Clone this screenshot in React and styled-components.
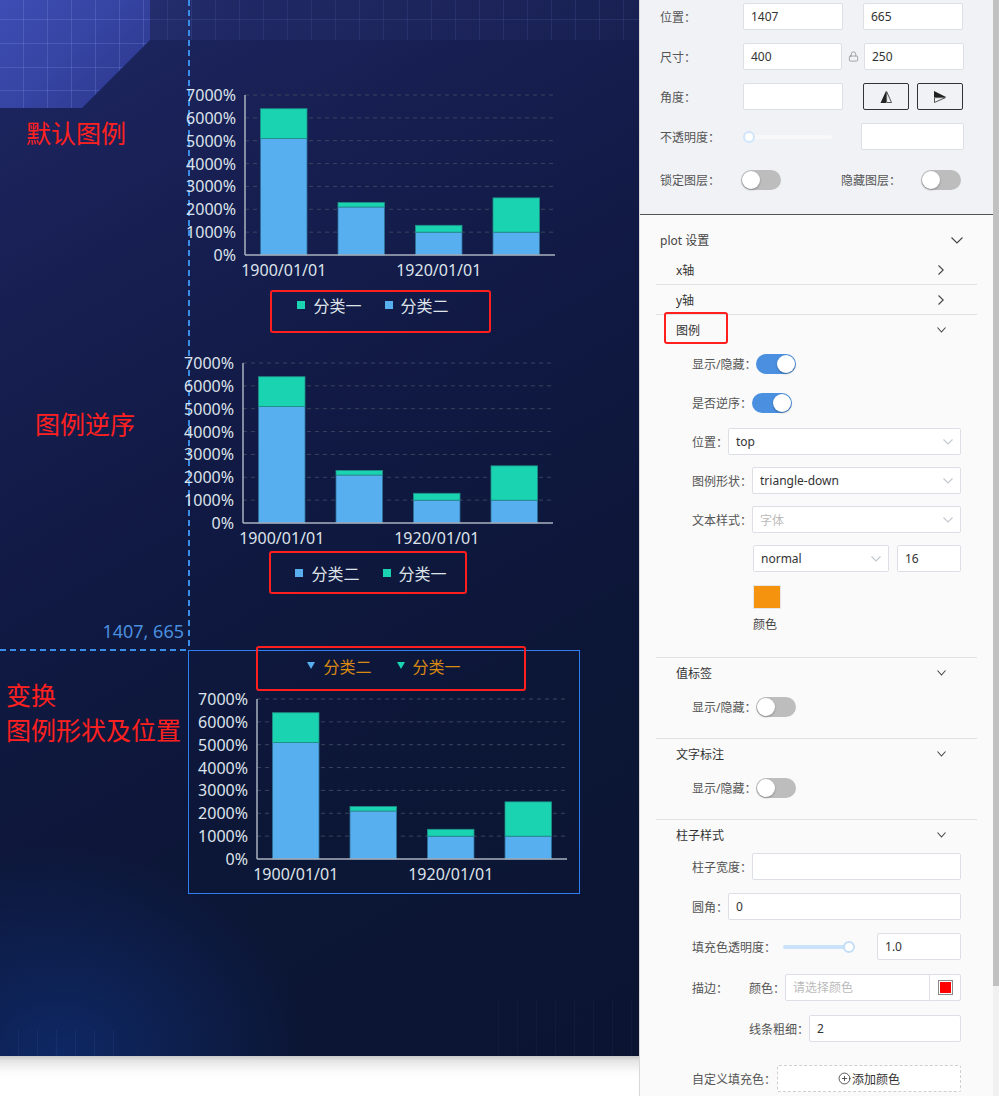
import React from 'react';
import styled, { createGlobalStyle } from 'styled-components';
import { Lock, CirclePlus } from 'lucide-react';

const GlobalStyle = createGlobalStyle`
  html, body { margin: 0; padding: 0; background: #fff; }
  body { font-family: "Noto Sans", "Noto Sans CJK SC", sans-serif; }
  * { box-sizing: border-box; }
`;

/* ---------- page frame ---------- */
const Page = styled.div`
  display: flex;
  width: 999px;
  height: 1096px;
  overflow: hidden;
`;

const Workspace = styled.main`
  flex: none;
  width: 639px;
  display: flex;
  flex-direction: column;
  background: #fff;
`;

const Canvas = styled.div`
  position: relative;
  height: 1056px;
  flex: none;
  overflow: hidden;
  background:
    linear-gradient(180deg, transparent 19.5px, rgba(120,140,230,0.14) 19.5px, rgba(120,140,230,0.14) 20.5px, transparent 20.5px) 0 0 / 100% 40px no-repeat,
    repeating-linear-gradient(90deg, transparent 0 23px, rgba(120,140,230,0.12) 23px 24px) 0 0 / 100% 40px no-repeat,
    linear-gradient(90deg, rgba(70,85,180,0.35), rgba(45,55,125,0.28) 35%, rgba(35,45,95,0.22)) 0 0 / 100% 40px no-repeat,
    repeating-linear-gradient(90deg, transparent 0 18px, rgba(110,140,230,0.08) 18px 19px) 0 1030px / 120px 26px no-repeat,
    repeating-linear-gradient(90deg, transparent 0 18px, rgba(110,140,230,0.05) 18px 19px) 480px 1000px / 160px 56px no-repeat,
    radial-gradient(ellipse 330px 280px at 60px 1056px, rgba(16,55,140,0.55), transparent 75%),
    linear-gradient(150deg, #1e2763 0%, #171f52 22%, #101942 45%, #0c1636 70%, #0b1532 100%);

  &::before {
    content: '';
    position: absolute;
    left: 0;
    top: 0;
    width: 150px;
    height: 108px;
    clip-path: polygon(0 0, 150px 0, 150px 40px, 82px 108px, 0 108px);
    background:
      repeating-linear-gradient(90deg, transparent 0 23px, rgba(150,170,245,0.2) 23px 24px),
      repeating-linear-gradient(180deg, transparent 0 19.5px, rgba(150,170,245,0.2) 19.5px 20.5px, transparent 20.5px 23.6px),
      linear-gradient(135deg, #3e4db4 0%, #3644a3 45%, #2c388b 100%);
  }
`;

const BottomShade = styled.div`
  flex: 1;
  background: linear-gradient(180deg, #c9c9c9 0, #e6e6e6 5px, #fbfbfb 16px, #fff 24px);
`;

/* ---------- canvas items ---------- */
const GuideV = styled.div`
  position: absolute;
  left: 188px;
  top: 0;
  width: 2px;
  height: 650px;
  background: repeating-linear-gradient(180deg, #3a8de6 0 6px, transparent 6px 10px);
`;

const GuideH = styled.div`
  position: absolute;
  left: 0;
  top: 649px;
  width: 189px;
  height: 2px;
  background: repeating-linear-gradient(90deg, #3a8de6 0 6px, transparent 6px 10px);
`;

const CoordTag = styled.div`
  position: absolute;
  left: 60px;
  top: 619px;
  width: 124px;
  text-align: right;
  font-family: "Noto Sans", sans-serif;
  font-size: 18px;
  line-height: 24px;
  color: #4a8fde;
`;

const Caption = styled.div`
  position: absolute;
  left: ${p => p.$x}px;
  top: ${p => p.$y}px;
  font-family: "Noto Sans CJK SC", sans-serif;
  font-size: 25px;
  line-height: 35px;
  color: #ff2020;
  white-space: nowrap;
`;

const Annotation = styled.div`
  position: absolute;
  left: ${p => p.$x}px;
  top: ${p => p.$y}px;
  width: ${p => p.$w}px;
  height: ${p => p.$h}px;
  border: 2.5px solid #ff1f1f;
  border-radius: 3px;
  pointer-events: none;
`;

const Widget = styled.div`
  position: absolute;
  left: ${p => p.$x}px;
  top: ${p => p.$y}px;
  width: ${p => p.$w}px;
  height: ${p => p.$h}px;
  display: flex;
  flex-direction: column;
  border: ${p => (p.$selected ? '1.5px solid #2f7ff0' : 'none')};
  margin: ${p => (p.$selected ? '-1px 0 0 -1px' : '0')};
`;

const PlotSvg = styled.svg`
  display: block;
  flex: none;
  text {
    font-family: "Noto Sans", sans-serif;
    font-size: 16px;
    fill: #dde3eb;
  }
`;

const LegendRow = styled.div`
  flex: none;
  height: ${p => p.$h}px;
  margin-top: ${p => p.$mt}px;
  display: flex;
  justify-content: center;
  align-items: center;
  gap: ${p => p.$gap}px;
`;

const LegendItem = styled.div`
  display: flex;
  align-items: center;
  gap: 8px;
  font-family: "Noto Sans CJK SC", sans-serif;
  font-size: 16px;
  line-height: 1;
  color: ${p => p.$color};
`;

const SquareMark = styled.span`
  width: 8px;
  height: 8px;
  background: ${p => p.$c};
`;

const BLUE = '#58aff0';
const TEAL = '#1ad3b1';
const ticks = [0, 1000, 2000, 3000, 4000, 5000, 6000, 7000];
const bars = [
  { blue: 5100, teal: 1300 },
  { blue: 2100, teal: 200 },
  { blue: 1000, teal: 300 },
  { blue: 1000, teal: 1500 },
];

function Plot() {
  const ax = 68, right = 378, top = 19, zero = 179, labelX = 59, labelY = 194;
  const k = (zero - top) / 7000;
  const band = (right - ax) / 4;
  const bw = band * 0.6;
  return (
    <PlotSvg width="392" height="205" viewBox="0 0 392 205">
      {ticks.map(t => {
        const y = zero - t * k;
        return (
          <g key={t}>
            {t > 0 && (
              <line x1={ax} x2={right} y1={y} y2={y} stroke="#39445e" strokeWidth="1" strokeDasharray="4 4" />
            )}
            <text x={labelX} y={y} textAnchor="end" dominantBaseline="central">{t}%</text>
          </g>
        );
      })}
      {bars.map((b, i) => {
        const x = ax + band * i + band * 0.2;
        const yb = zero - b.blue * k;
        const yt = zero - (b.blue + b.teal) * k;
        return (
          <g key={i}>
            <rect x={x} y={yb} width={bw} height={zero - yb} fill={BLUE} stroke="#2f6f96" strokeWidth="0.8" />
            <rect x={x} y={yt} width={bw} height={yb - yt} fill={TEAL} stroke="#1f8f86" strokeWidth="0.8" />
          </g>
        );
      })}
      <line x1={ax} x2={ax} y1={top} y2={zero} stroke="#aab2bf" strokeWidth="1.5" />
      <line x1={ax} x2={right} y1={zero} y2={zero} stroke="#aab2bf" strokeWidth="1.5" />
      <text x={ax + band * 0.5} y={labelY} textAnchor="middle" dominantBaseline="central">1900/01/01</text>
      <text x={ax + band * 2.5} y={labelY} textAnchor="middle" dominantBaseline="central">1920/01/01</text>
    </PlotSvg>
  );
}

const TriangleMark = ({ c }) => (
  <svg width="8" height="7" viewBox="0 0 8 7">
    <polygon points="0,0 8,0 4,7" fill={c} />
  </svg>
);

function Legend({ items, shape, textColor, h, mt, gap }) {
  return (
    <LegendRow $h={h} $mt={mt} $gap={gap}>
      {items.map(it => (
        <LegendItem key={it.name} $color={textColor}>
          {shape === 'triangle' ? <TriangleMark c={it.color} /> : <SquareMark $c={it.color} />}
          {it.name}
        </LegendItem>
      ))}
    </LegendRow>
  );
}

const normalOrder = [
  { name: '分类一', color: TEAL },
  { name: '分类二', color: BLUE },
];
const reversedOrder = [
  { name: '分类二', color: BLUE },
  { name: '分类一', color: TEAL },
];

/* ---------- panel ---------- */
const Panel = styled.aside`
  flex: none;
  width: 360px;
  display: flex;
  border-left: 1px solid #d8d8d8;
  background: #fafafa;
  font-family: "Noto Sans", "Noto Sans CJK SC", sans-serif;
  font-size: 12px;
  color: #555;
`;

const PanelScroll = styled.div`
  flex: 1;
  min-width: 0;
  overflow: hidden;
`;

const ScrollTrack = styled.div`
  flex: none;
  width: 6px;
  background: #f1f1f1;
`;

const ScrollThumb = styled.div`
  height: 986px;
  background: #c1c1c1;
`;

const Basics = styled.section`
  height: 215px;
  padding: 3px 0 0 20px;
  background: #f0f2f5;
  border-bottom: 1px solid #555;
`;

const BasicRow = styled.div`
  display: flex;
  align-items: center;
  height: 27px;
  margin-bottom: ${p => (p.$mb ?? 13)}px;
`;

const BasicLabel = styled.span`
  flex: none;
  width: ${p => p.$w}px;
  margin-left: ${p => p.$ml || 0}px;
  white-space: nowrap;
`;

const Field = styled.input`
  flex: ${p => (p.$w ? 'none' : '1')};
  width: ${p => (p.$w ? `${p.$w}px` : 'auto')};
  min-width: 0;
  height: 27px;
  margin-left: ${p => p.$ml || 0}px;
  padding: 0 7px;
  border: 1px solid #dcdfe6;
  border-radius: ${p => (p.$joined ? '2px 0 0 2px' : '2px')};
  background: #fff;
  font-family: inherit;
  font-size: 12px;
  color: #333;
  outline: none;
  &::placeholder { color: #bbb; }
`;

const LockSlot = styled.span`
  flex: none;
  width: 22px;
  display: flex;
  justify-content: center;
  color: #8a8a8a;
`;

const IconButton = styled.span`
  flex: none;
  width: 46px;
  height: 27px;
  margin-left: ${p => p.$ml}px;
  display: flex;
  align-items: center;
  justify-content: center;
  border: 1px solid #333;
  border-radius: 2px;
`;

const SliderTrack = styled.span`
  position: relative;
  flex: none;
  width: ${p => p.$w}px;
  height: 4px;
  margin-left: ${p => p.$ml || 0}px;
  border-radius: 2px;
  background: ${p => p.$track};
`;

const SliderThumb = styled.span`
  position: absolute;
  top: 50%;
  left: ${p => p.$pos}px;
  width: 12px;
  height: 12px;
  margin: -6px 0 0 -6px;
  border-radius: 50%;
  background: #fff;
  border: 2px solid ${p => p.$ring};
`;

const Toggle = styled.span`
  position: relative;
  flex: none;
  width: 40px;
  height: 20px;
  border-radius: 10px;
  background: ${p => (p.$on ? '#4a8fe0' : '#bdbdbd')};
  &::after {
    content: '';
    position: absolute;
    top: 1px;
    left: ${p => (p.$on ? '21px' : '1px')};
    width: 18px;
    height: 18px;
    border-radius: 50%;
    background: #fff;
    box-shadow: 0 1px 2px rgba(0, 0, 0, 0.3);
  }
`;

const Lower = styled.section`
  padding: 10px 16px 0;
`;

const PlotHeader = styled.div`
  display: flex;
  align-items: center;
  justify-content: space-between;
  height: 30px;
  padding: 0 14px 0 4px;
  color: #444;
`;

const SubSection = styled.div`
  border-bottom: ${p => (p.$last ? 'none' : '1px solid #e2e2e2')};
`;

const SubHeader = styled.div`
  position: relative;
  display: flex;
  align-items: center;
  justify-content: space-between;
  height: 29px;
  padding: 0 31px 0 20px;
  color: #333;
`;

const HeaderMark = styled.span`
  position: absolute;
  left: 8px;
  top: -3px;
  width: 64px;
  height: 32px;
  border: 2.5px solid #ff1f1f;
  border-radius: 3px;
`;

const IconBox = styled.span`
  flex: none;
  width: ${p => p.$w || 10}px;
  display: flex;
  justify-content: center;
  align-items: center;
`;

const SubBody = styled.div`
  padding: ${p => p.$pt}px 16px ${p => p.$pb}px 36px;
`;

const FormRow = styled.div`
  display: flex;
  align-items: center;
  height: 27px;
  margin-bottom: ${p => (p.$mb ?? 12)}px;
  margin-left: ${p => p.$ml || 0}px;
`;

const FormLabel = styled.span`
  flex: none;
  width: ${p => (p.$w ? `${p.$w}px` : 'auto')};
  white-space: nowrap;
  color: #555;
`;

const Select = styled.div`
  flex: ${p => (p.$w ? 'none' : '1')};
  width: ${p => (p.$w ? `${p.$w}px` : 'auto')};
  height: 27px;
  display: flex;
  align-items: center;
  justify-content: space-between;
  padding: 0 7px;
  border: 1px solid #dcdfe6;
  border-radius: 2px;
  background: #fff;
  color: ${p => (p.$placeholder ? '#bbb' : '#333')};
`;

const Swatch = styled.div`
  width: 28px;
  height: 24px;
  margin: 13px 0 0 61px;
  background: #f5930f;
  border: 1px solid #e6e6e6;
`;

const SwatchCaption = styled.div`
  margin: 8px 0 0 61px;
  line-height: 16px;
  color: #444;
`;

const ColorButton = styled.span`
  flex: none;
  width: 32px;
  height: 27px;
  margin-left: -1px;
  display: flex;
  align-items: center;
  justify-content: center;
  border: 1px solid #dcdfe6;
  border-radius: 0 2px 2px 0;
  background: #fff;
`;

const ColorChip = styled.span`
  width: 15px;
  height: 15px;
  background: #f00;
  border: 1px solid #8a8a8a;
  box-shadow: inset 0 0 0 1px #fff;
`;

const DashedButton = styled.div`
  flex: 1;
  height: 27px;
  margin-left: 1px;
  display: flex;
  align-items: center;
  justify-content: center;
  gap: 1px;
  border: 1px dashed #cfcfcf;
  border-radius: 2px;
  background: #fff;
  color: #333;
`;

const ChevronDown = ({ w = 9, h = 5, color = '#444' }) => (
  <svg width={w} height={h + 1} viewBox={`0 0 ${w} ${h + 1}`}>
    <polyline points={`0.5,0.5 ${w / 2},${h} ${w - 0.5},0.5`} fill="none" stroke={color} strokeWidth="1.1" />
  </svg>
);

const ChevronRight = () => (
  <svg width="6" height="10" viewBox="0 0 6 10">
    <polyline points="0.5,0.5 5.2,5 0.5,9.5" fill="none" stroke="#444" strokeWidth="1.1" />
  </svg>
);

const FlipH = () => (
  <svg width="14" height="14" viewBox="0 0 14 14">
    <polygon points="7,1 7,13 1.5,13" fill="#222" />
    <polygon points="7.6,1.5 12.5,12.5 7.6,12.5" fill="none" stroke="#444" strokeWidth="0.9" />
  </svg>
);

const FlipV = () => (
  <svg width="14" height="14" viewBox="0 0 14 14">
    <polygon points="1,1 13,7 1,7" fill="#222" />
    <polygon points="1.5,7.6 12.5,7.6 1.5,12.5" fill="none" stroke="#444" strokeWidth="0.9" />
  </svg>
);

function SubPanel({ title, open, last, marked, pt = 6, pb = 18, children }) {
  return (
    <SubSection $last={last}>
      <SubHeader>
        {marked && <HeaderMark />}
        <span>{title}</span>
        <IconBox>{open ? <ChevronDown /> : <ChevronRight />}</IconBox>
      </SubHeader>
      {children && <SubBody $pt={pt} $pb={pb}>{children}</SubBody>}
    </SubSection>
  );
}

function SettingsPanel() {
  return (
    <Panel>
      <PanelScroll>
        <Basics>
          <BasicRow>
            <BasicLabel $w={83}>位置：</BasicLabel>
            <Field $w={100} value="1407" readOnly />
            <Field $w={100} $ml={20} value="665" readOnly />
          </BasicRow>
          <BasicRow>
            <BasicLabel $w={83}>尺寸：</BasicLabel>
            <Field $w={99} value="400" readOnly />
            <LockSlot><Lock size={11} strokeWidth={1.6} /></LockSlot>
            <Field $w={100} value="250" readOnly />
          </BasicRow>
          <BasicRow>
            <BasicLabel $w={83}>角度：</BasicLabel>
            <Field $w={100} value="" readOnly />
            <IconButton $ml={20}><FlipH /></IconButton>
            <IconButton $ml={8}><FlipV /></IconButton>
          </BasicRow>
          <BasicRow $mb={16}>
            <BasicLabel $w={83}>不透明度：</BasicLabel>
            <SliderTrack $w={89} $track="#f8f8f9">
              <SliderThumb $pos={6} $ring="#cfe5fb" />
            </SliderTrack>
            <Field $w={103} $ml={29} value="" readOnly />
          </BasicRow>
          <BasicRow>
            <BasicLabel $w={81}>锁定图层：</BasicLabel>
            <Toggle />
            <BasicLabel $w={80} $ml={60}>隐藏图层：</BasicLabel>
            <Toggle />
          </BasicRow>
        </Basics>

        <Lower>
          <PlotHeader>
            <span>plot 设置</span>
            <ChevronDown w={12} h={6} />
          </PlotHeader>

          <SubPanel title="x轴" />
          <SubPanel title="y轴" />

          <SubPanel title="图例" open marked pb={24}>
            <FormRow>
              <FormLabel>显示/隐藏：</FormLabel>
              <Toggle $on />
            </FormRow>
            <FormRow>
              <FormLabel>是否逆序：</FormLabel>
              <Toggle $on />
            </FormRow>
            <FormRow>
              <FormLabel>位置：</FormLabel>
              <Select>top<ChevronDown w={10} h={5} color="#c4c7cc" /></Select>
            </FormRow>
            <FormRow>
              <FormLabel>图例形状：</FormLabel>
              <Select>triangle-down<ChevronDown w={10} h={5} color="#c4c7cc" /></Select>
            </FormRow>
            <FormRow>
              <FormLabel>文本样式：</FormLabel>
              <Select $placeholder>字体<ChevronDown w={10} h={5} color="#c4c7cc" /></Select>
            </FormRow>
            <FormRow $ml={61} $mb={0}>
              <Select $w={136}>normal<ChevronDown w={10} h={5} color="#c4c7cc" /></Select>
              <Field $w={64} $ml={8} value="16" readOnly />
            </FormRow>
            <Swatch />
            <SwatchCaption>颜色</SwatchCaption>
          </SubPanel>

          <SubPanel title="值标签" open>
            <FormRow $mb={0}>
              <FormLabel>显示/隐藏：</FormLabel>
              <Toggle />
            </FormRow>
          </SubPanel>

          <SubPanel title="文字标注" open>
            <FormRow $mb={0}>
              <FormLabel>显示/隐藏：</FormLabel>
              <Toggle />
            </FormRow>
          </SubPanel>

          <SubPanel title="柱子样式" open last pt={4} pb={10}>
            <FormRow $mb={13}>
              <FormLabel>柱子宽度：</FormLabel>
              <Field value="" readOnly />
            </FormRow>
            <FormRow $mb={13}>
              <FormLabel>圆角：</FormLabel>
              <Field value="0" readOnly />
            </FormRow>
            <FormRow $mb={14}>
              <FormLabel>填充色透明度：</FormLabel>
              <SliderTrack $w={66} $ml={7} $track="#cbe3fa">
                <SliderThumb $pos={66} $ring="#c2def8" />
              </SliderTrack>
              <Field $w={84} $ml={28} value="1.0" readOnly />
            </FormRow>
            <FormRow $mb={14}>
              <FormLabel $w={57}>描边：</FormLabel>
              <FormLabel>颜色：</FormLabel>
              <Field $joined placeholder="请选择颜色" readOnly />
              <ColorButton><ColorChip /></ColorButton>
            </FormRow>
            <FormRow $ml={57} $mb={23}>
              <FormLabel>线条粗细：</FormLabel>
              <Field value="2" readOnly />
            </FormRow>
            <FormRow>
              <FormLabel>自定义填充色：</FormLabel>
              <DashedButton>
                <CirclePlus size={13} strokeWidth={1.5} />
                添加颜色
              </DashedButton>
            </FormRow>
          </SubPanel>
        </Lower>
      </PanelScroll>
      <ScrollTrack>
        <ScrollThumb />
      </ScrollTrack>
    </Panel>
  );
}

export default function App() {
  return (
    <>
      <GlobalStyle />
      <Page>
        <Workspace>
          <Canvas>
            <GuideV />
            <GuideH />
            <CoordTag>1407, 665</CoordTag>

            <Caption $x={26} $y={115}>默认图例</Caption>
            <Caption $x={35} $y={406}>图例逆序</Caption>
            <Caption $x={6} $y={677}>变换<br />图例形状及位置</Caption>

            <Widget $x={177} $y={76} $w={392} $h={244}>
              <Plot />
              <Legend items={normalOrder} textColor="#dfe4ea" h={28} mt={10} gap={23} />
            </Widget>

            <Widget $x={175} $y={344} $w={392} $h={244}>
              <Plot />
              <Legend items={reversedOrder} textColor="#dfe4ea" h={28} mt={10} gap={23} />
            </Widget>

            <Widget $x={189} $y={651} $w={392} $h={244} $selected>
              <Legend items={reversedOrder} shape="triangle" textColor="#d98a12" h={29} mt={0} gap={25} />
              <Plot />
            </Widget>

            <Annotation $x={270} $y={290} $w={221} $h={43} />
            <Annotation $x={269} $y={551} $w={198} $h={43} />
            <Annotation $x={256} $y={646} $w={270} $h={45} />
          </Canvas>
          <BottomShade />
        </Workspace>
        <SettingsPanel />
      </Page>
    </>
  );
}
